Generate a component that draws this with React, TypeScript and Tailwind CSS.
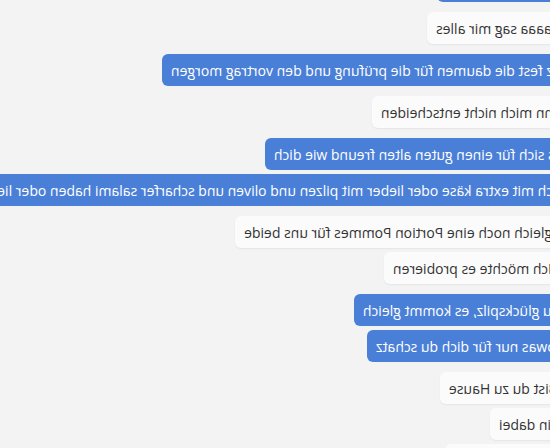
import React from "react";

type Msg = { text: string; me: boolean; row: string; gap: string };

const messages: Msg[] = [
  { text: "okay dann bis gleich, ich freue mich schon", me: true, row: "w-[113px]", gap: "mt-0" },
  { text: "ja naaaa sag mir alles", me: false, row: "w-[123px]", gap: "mt-2.5" },
  { text: "ja ich drücke dir ganz fest die daumen für die prüfung und den vortrag morgen", me: true, row: "w-[388px]", gap: "mt-2.5" },
  { text: "Ich kann mich nicht entscheiden", me: false, row: "w-[178px]", gap: "mt-2.5" },
  { text: "ja so gehört es sich für einen guten alten freund wie dich", me: true, row: "w-[285px]", gap: "mt-2.5" },
  { text: "ok willst du deine pizza gleich mit extra käse oder lieber mit pilzen und oliven und scharfer salami haben oder lieber nicht", me: true, row: "w-[620px]", gap: "mt-1" },
  { text: "Ich bestelle gleich noch eine Portion Pommes für uns beide", me: false, row: "w-[315px]", gap: "mt-2.5" },
  { text: "Ich möchte es probieren", me: false, row: "w-[166px]", gap: "mt-1" },
  { text: "jaaa du glückspilz, es kommt gleich", me: true, row: "w-[196px]", gap: "mt-2.5" },
  { text: "ich mache sowas nur für dich du schatz", me: true, row: "w-[183px]", gap: "mt-1" },
  { text: "Bist du zu Hause", me: false, row: "w-[110px]", gap: "mt-2.5" },
  { text: "Bin dabei", me: false, row: "w-[60px]", gap: "mt-1" },
  { text: "Ich komme auch mit", me: false, row: "w-[105px]", gap: "mt-1" },
];

export default function App() {
  return (
    <div
      className="w-[550px] h-[448px] overflow-hidden bg-[#f3f3f3]"
      style={{ fontFamily: '"Open Sans", "Noto Sans", sans-serif' }}
    >
      <div className="-scale-x-100 w-[550px] h-[448px] overflow-hidden">
        <div className="flex flex-col items-start mt-[-30px]">
          {messages.map((m, i) => (
            <div key={i} className={`flex justify-end shrink-0 ${m.row} ${m.gap}`}>
              <div
                className={
                  m.me
                    ? "shrink-0 whitespace-nowrap h-8 flex items-center px-[9px] rounded-md bg-[#4a7fd8] text-white text-[14px]"
                    : "shrink-0 whitespace-nowrap h-8 flex items-center px-[9px] rounded-md bg-[#fbfbfb] text-[#333333] text-[14px] shadow-[0_1px_2px_rgba(0,0,0,0.06)]"
                }
              >
                {m.text}
              </div>
            </div>
          ))}
        </div>
      </div>
    </div>
  );
}
